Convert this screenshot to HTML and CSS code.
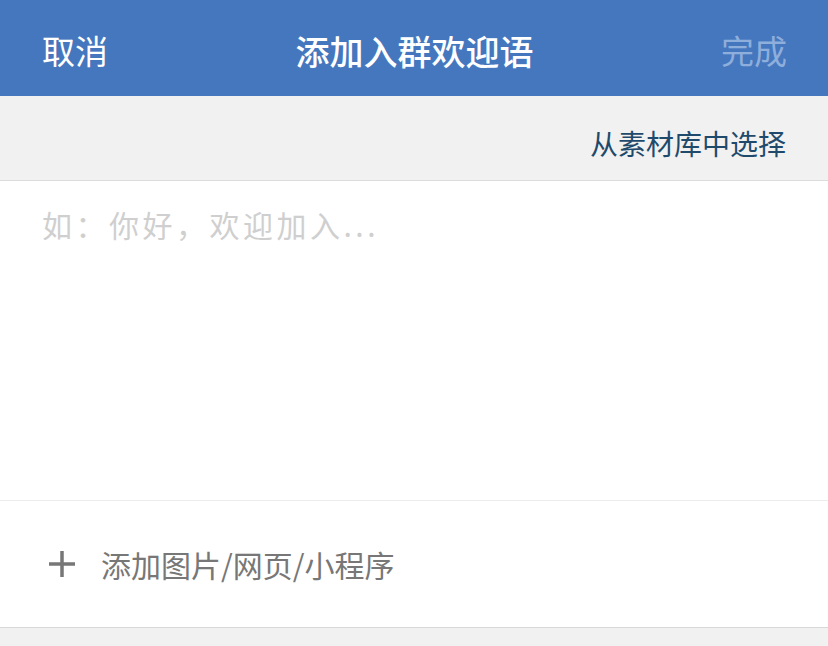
FILE: index.html
```html
<!DOCTYPE html>
<html lang="zh-CN">
<head>
    <meta charset="UTF-8">
    <meta name="viewport" content="width=device-width, initial-scale=1.0">
    <title>添加入群欢迎语</title>
    <link rel="stylesheet" href="styles.css">
</head>
<body>

<div class="page">
    <div class="topbar">
        <span class="topbar-btn">取消</span>
        <span class="topbar-title">添加入群欢迎语</span>
        <span class="topbar-btn disabled">完成</span>
    </div>

    <div class="toolbar">
        <span class="toolbar-link">从素材库中选择</span>
    </div>

    <div class="editor">
        <div class="placeholder">如：你好，欢迎加入...</div>
    </div>

    <div class="attach">
        <svg class="attach-icon" width="30" height="30" viewBox="0 0 30 30">
            <path d="M15 2 V28 M2 15 H28" stroke="#777777" stroke-width="3.5" fill="none"/>
        </svg>
        <span class="attach-text">添加图片/网页/小程序</span>
    </div>

    <div class="bottom"></div>
</div>

</body>
</html>
```

FILE: styles.css
```css
body {
    margin: 0;
    padding: 0;
    font-family: "Noto Sans CJK SC", "Noto Sans", sans-serif;
    background-color: #f1f1f1;
    overflow: hidden;
}
.page {
    width: 828px;
    height: 646px;
    display: flex;
    flex-direction: column;
}
.topbar {
    height: 96px;
    flex-shrink: 0;
    box-sizing: border-box;
    padding: 4px 42px 0 42px;
    background-color: #4477be;
    display: flex;
    align-items: center;
    justify-content: space-between;
    color: #ffffff;
}
.topbar-btn {
    font-size: 33px;
    width: 70px;
}
.topbar-btn.disabled {
    color: #8eaedb;
    text-align: right;
    margin-right: -1px;
}
.topbar-title {
    font-size: 34px;
    font-weight: 500;
}
.toolbar {
    height: 85px;
    flex-shrink: 0;
    box-sizing: border-box;
    padding: 10px 42px 0 42px;
    display: flex;
    align-items: center;
    justify-content: flex-end;
    border-bottom: 1px solid #dcdcdc;
}
.toolbar-link {
    font-size: 28px;
    color: #1f4a6c;
}
.editor {
    height: 319px;
    flex-shrink: 0;
    background-color: #ffffff;
    padding: 0 42px;
    border-bottom: 1px solid #ececec;
}
.placeholder {
    margin-top: 21px;
    font-size: 30px;
    letter-spacing: 3.5px;
    color: #cfcfcf;
}
.attach {
    height: 126px;
    flex-shrink: 0;
    background-color: #ffffff;
    display: flex;
    align-items: center;
    padding: 0 0 0 47px;
    border-bottom: 1px solid #d8d8d8;
}
.attach-icon {
    margin-right: 24px;
}
.attach-text {
    font-size: 30px;
    color: #777777;
}
.bottom {
    flex: 1;
}
```
